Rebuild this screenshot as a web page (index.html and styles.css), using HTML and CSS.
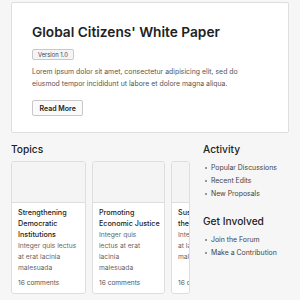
FILE: index.html
```html
<!DOCTYPE html>
<html lang="en">
<head>
    <meta charset="UTF-8">
    <title>Global Citizens' White Paper</title>
    <link rel="stylesheet" href="styles.css">
</head>
<body>

<div class="page">
    <div class="hero">
        <h1>Global Citizens' White Paper</h1>
        <span class="badge">Version 1.0</span>
        <p>Lorem ipsum dolor sit amet, consectetur adipisicing elit, sed do eiusmod tempor incididunt ut labore et dolore magna aliqua.</p>
        <button class="btn">Read More</button>
    </div>

    <div class="main">
        <div class="topics">
            <h2>Topics</h2>
            <div class="cards">
                <div class="card">
                    <div class="thumb"></div>
                    <div class="body">
                        <h3>Strengthening Democratic Institutions</h3>
                        <p>Integer quis lectus at erat lacinia malesuada</p>
                        <span class="meta">16 comments</span>
                    </div>
                </div>
                <div class="card card-narrow">
                    <div class="thumb"></div>
                    <div class="body">
                        <h3>Promoting Economic Justice</h3>
                        <p>Integer quis lectus at erat lacinia malesuada</p>
                        <span class="meta">16 comments</span>
                    </div>
                </div>
                <div class="card card-cut">
                    <div class="thumb"></div>
                    <div class="body">
                        <h3>Sustainability: the Way Forward</h3>
                        <p>Integer quis lectus at lacinia malesuada</p>
                        <span class="meta">16 comments</span>
                    </div>
                </div>
            </div>
        </div>

        <div class="side">
            <h2>Activity</h2>
            <ul>
                <li>Popular Discussions</li>
                <li>Recent Edits</li>
                <li>New Proposals</li>
            </ul>
            <h2>Get Involved</h2>
            <ul>
                <li>Join the Forum</li>
                <li>Make a Contribution</li>
            </ul>
        </div>
    </div>
</div>

</body>
</html>
```

FILE: styles.css
```css
* {
    box-sizing: border-box;
}

body {
    margin: 0;
    background: #f6f6f6;
    font-family: Inter, "Noto Sans", sans-serif;
    color: #222;
}

h1, h2, h3, p, ul {
    margin: 0;
    padding: 0;
}

.page {
    padding: 2px 11px 0;
}

/* hero */
.hero {
    background: #fff;
    border: 1px solid #dedede;
    border-radius: 2px;
    padding: 20px 20px 16px;
}

.hero h1 {
    font-size: 13.7px;
    font-weight: 600;
    line-height: 18px;
}

.badge {
    display: block;
    width: fit-content;
    margin-top: 8px;
    padding: 0 5px;
    font-size: 5.8px;
    line-height: 9px;
    color: #444;
    background: #f5f5f5;
    border: 1px solid #c8c8c8;
    border-radius: 2px;
}

.hero p {
    max-width: 226px;
    margin-top: 6px;
    font-size: 6.9px;
    line-height: 12px;
    color: #555;
}

.btn {
    display: block;
    margin-top: 10px;
    height: 16px;
    padding: 0 6.5px;
    font-family: inherit;
    font-size: 7px;
    font-weight: 600;
    color: #222;
    background: #fafafa;
    border: 1px solid #c8c8c8;
    border-radius: 2px;
}

/* main */
.main {
    display: grid;
    grid-template-columns: 179px 1fr;
    gap: 13px;
    margin-top: 9px;
}

.main h2 {
    font-size: 10.2px;
    font-weight: 500;
    line-height: 14px;
}

.cards {
    display: grid;
    grid-template-columns: 75px 73px 19px;
    gap: 6px;
    margin-top: 5px;
}

.card {
    display: flex;
    flex-direction: column;
    background: #fff;
    border: 1px solid #dedede;
    border-radius: 3px;
    overflow: hidden;
}

.card .thumb {
    flex: none;
    height: 41px;
    background: #f4f4f4;
    border-bottom: 1px solid #dedede;
}

.card .body {
    flex: 1;
    display: flex;
    flex-direction: column;
    padding: 4px 5px 4px 6px;
}

.card h3 {
    font-size: 7.2px;
    font-weight: 500;
    line-height: 11px;
}

.card p {
    margin-top: 1px;
    padding-right: 1px;
    font-size: 6.7px;
    line-height: 11px;
    color: #666;
}

.card .meta {
    margin-top: auto;
    padding-top: 4px;
    font-size: 6.6px;
    line-height: 11px;
    color: #555;
}

.card-narrow h3 {
    margin-right: -6px;
}

.card-narrow p {
    padding-right: 7px;
}

.card-cut .body {
    flex: 1 0 auto;
    width: 71px;
}

/* sidebar */
.side ul {
    list-style: none;
    margin: 5px 0 14px;
}

.side li {
    position: relative;
    padding-left: 8px;
    font-size: 6.9px;
    line-height: 13px;
    color: #444;
}

.side li::before {
    content: "";
    position: absolute;
    left: 2px;
    top: 6px;
    width: 2px;
    height: 2px;
    border-radius: 50%;
    background: #777;
}
```
